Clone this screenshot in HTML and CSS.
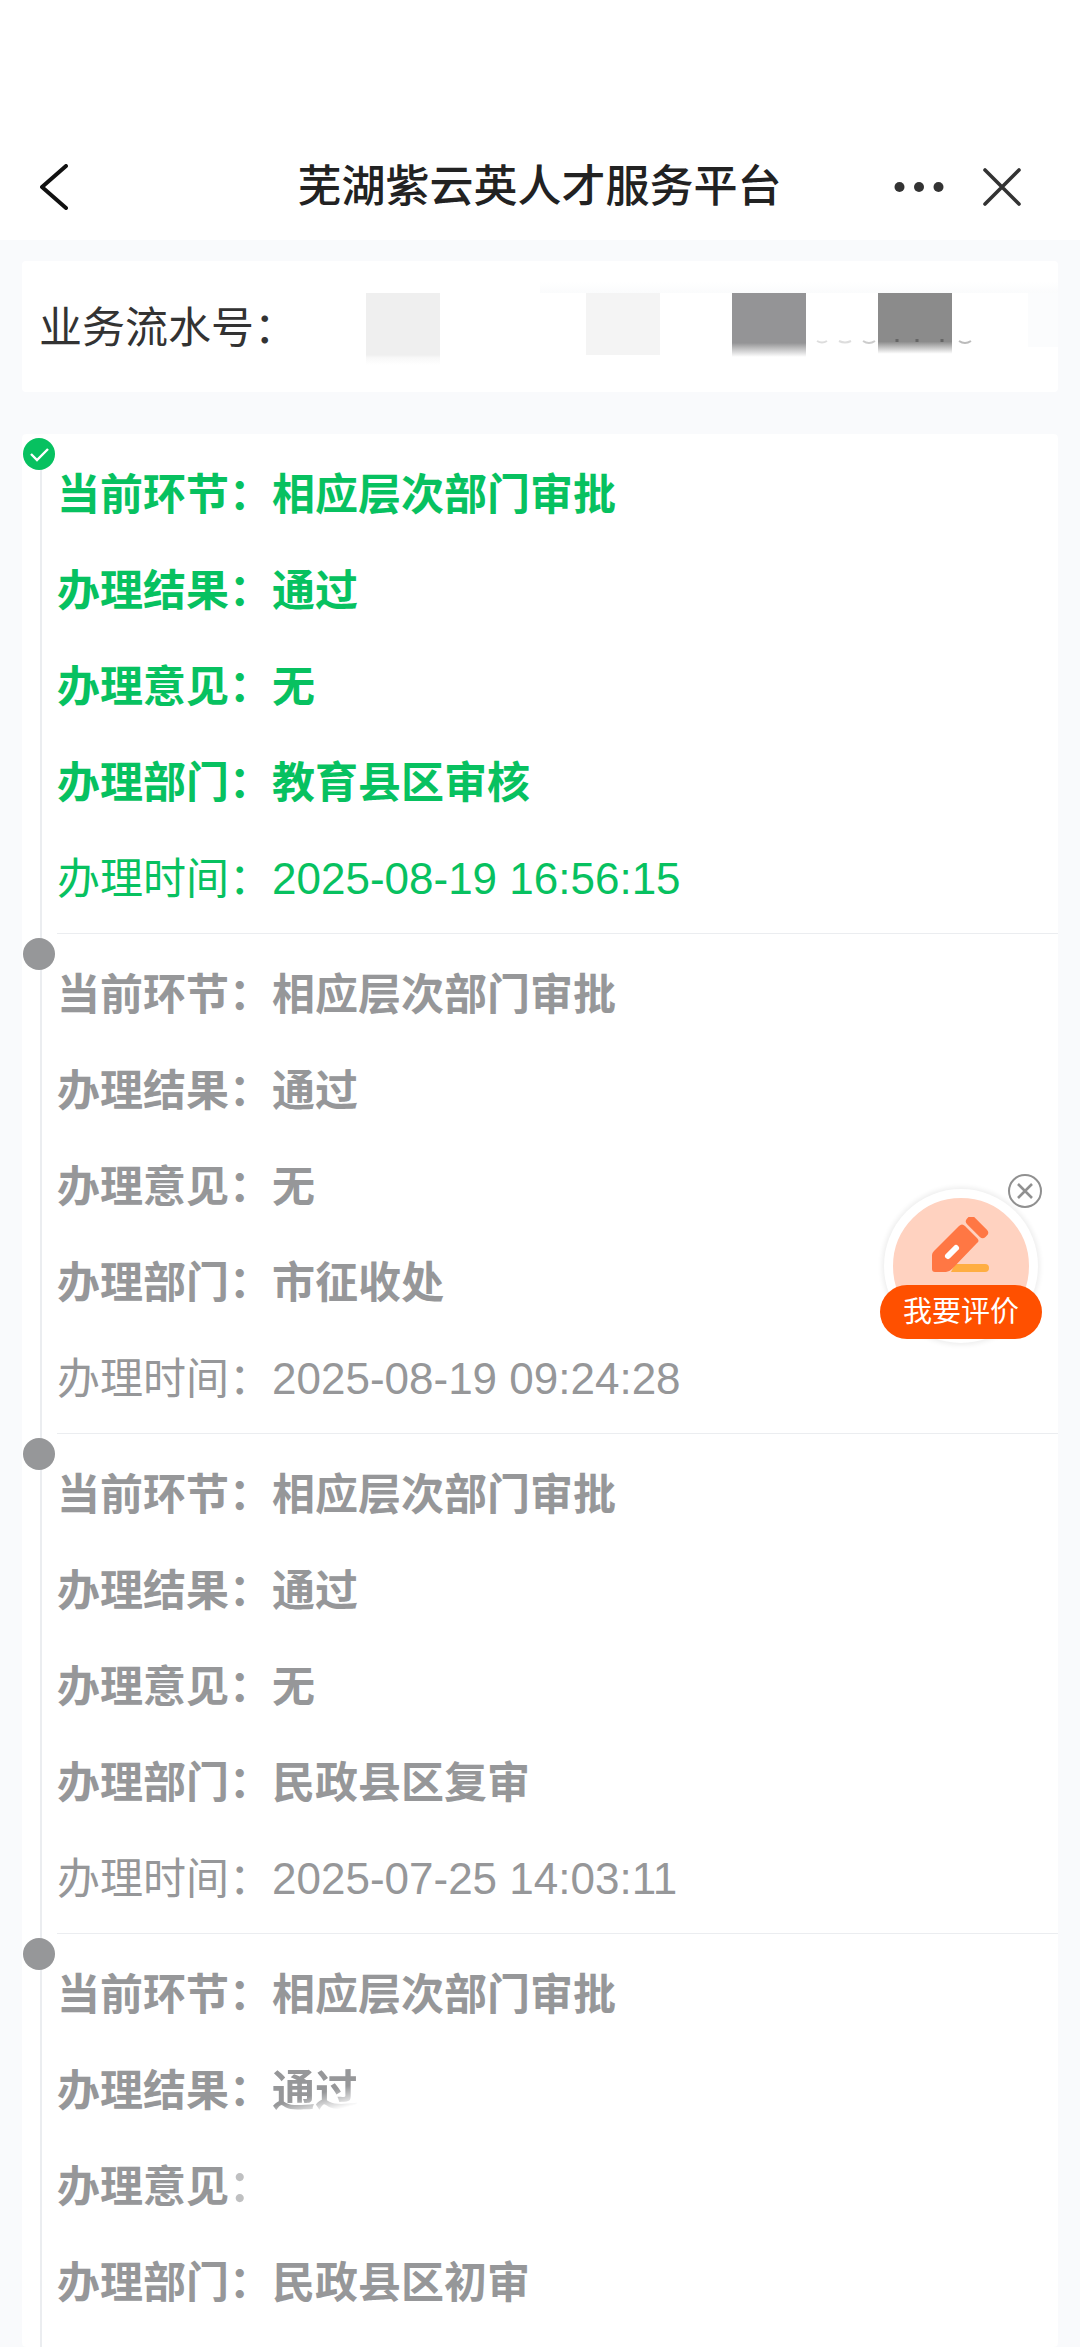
FILE: index.html
```html
<!DOCTYPE html>
<html lang="zh-CN">
<head>
<meta charset="utf-8">
<meta name="viewport" content="width=device-width, initial-scale=1">
<title>芜湖紫云英人才服务平台</title>
<link rel="stylesheet" href="styles.css">
</head>
<body>
<header class="header">
  <button class="icon-button" type="button" aria-label="返回">
    <svg width="28" height="46" viewBox="0 0 28 46"><path d="M26 2 2 23 26 44" fill="none" stroke="#111" stroke-width="4" stroke-linecap="round" stroke-linejoin="round"/></svg>
  </button>
  <h1 class="title">芜湖紫云英人才服务平台</h1>
  <div class="actions">
    <button class="icon-button" type="button" aria-label="更多">
      <svg width="50" height="12" viewBox="0 0 50 12" fill="#333"><circle cx="5.5" cy="6" r="5"/><circle cx="25" cy="6" r="5"/><circle cx="44.5" cy="6" r="5"/></svg>
    </button>
    <button class="icon-button" type="button" aria-label="关闭">
      <svg width="38" height="38" viewBox="0 0 38 38"><path d="M2 2 36 36M36 2 2 36" fill="none" stroke="#333" stroke-width="3.6" stroke-linecap="round"/></svg>
    </button>
  </div>
</header>

<main class="content">
  <section class="card serial">
    <span class="serial-label">业务流水号：</span>
    <svg class="serial-mask" width="768" height="83" viewBox="0 0 768 83" aria-hidden="true">
      <defs>
        <linearGradient id="fade" x1="0" y1="0" x2="0" y2="1"><stop offset="0" stop-color="#949496"/><stop offset=".78" stop-color="#949496"/><stop offset="1" stop-color="#949496" stop-opacity="0"/></linearGradient>
        <linearGradient id="fade-dark" x1="0" y1="0" x2="0" y2="1"><stop offset="0" stop-color="#8b8b8b"/><stop offset=".76" stop-color="#8b8b8b"/><stop offset=".95" stop-color="#8b8b8b" stop-opacity="0"/></linearGradient>
        <linearGradient id="fade-light" x1="0" y1="0" x2="0" y2="1"><stop offset="0" stop-color="#efefef"/><stop offset=".86" stop-color="#efefef"/><stop offset=".9" stop-color="#f8f8f8"/><stop offset="1" stop-color="#fff"/></linearGradient>
        <linearGradient id="haze" x1="0" y1="0" x2="0" y2="1"><stop offset="0" stop-color="#fff"/><stop offset="1" stop-color="#fafbfc"/></linearGradient>
      </defs>
      <rect x="250" width="518" height="11" fill="url(#haze)"/>
      <rect x="738" y="11" width="30" height="54" fill="#fbfcfd"/>
      <rect x="76" y="11" width="74" height="72" fill="url(#fade-light)"/>
      <rect x="296" y="11" width="74" height="62" fill="#f4f4f4"/>
      <rect x="442" y="11" width="74" height="64" fill="url(#fade)"/>
      <rect x="588" y="11" width="74" height="64" fill="url(#fade-dark)"/>
      <g fill="none" stroke="#ddd" stroke-width="2"><path d="M527 59q5 3 10 0"/><path d="M549 59q6 3 12 0"/><path d="M573 59q6 4 12 0" stroke="#ccc"/><path d="M669 59q6 4 12 0" stroke="#bbb"/></g>
      <path d="M607 57v3M627 57v3M652 57v3" stroke="#666" stroke-width="3"/>
    </svg>
  </section>

  <ol class="card steps">
    <li class="step active">
      <span class="marker"><svg width="32" height="32" viewBox="0 0 32 32"><path d="m8 16 6 6 11-11" fill="none" stroke="#fff" stroke-width="2.4"/></svg></span>
      <div class="detail">
        <p>当前环节：相应层次部门审批</p>
        <p>办理结果：通过</p>
        <p>办理意见：无</p>
        <p>办理部门：教育县区审核</p>
        <p class="when">办理时间：<time>2025-08-19 16:56:15</time></p>
      </div>
    </li>
    <li class="step">
      <span class="marker"></span>
      <div class="detail">
        <p>当前环节：相应层次部门审批</p>
        <p>办理结果：通过</p>
        <p>办理意见：无</p>
        <p>办理部门：市征收处</p>
        <p class="when">办理时间：<time>2025-08-19 09:24:28</time></p>
      </div>
    </li>
    <li class="step">
      <span class="marker"></span>
      <div class="detail">
        <p>当前环节：相应层次部门审批</p>
        <p>办理结果：通过</p>
        <p>办理意见：无</p>
        <p>办理部门：民政县区复审</p>
        <p class="when">办理时间：<time>2025-07-25 14:03:11</time></p>
      </div>
    </li>
    <li class="step">
      <span class="marker"></span>
      <div class="detail">
        <p>当前环节：相应层次部门审批</p>
        <p>办理结果：<span class="faded">通过</span></p>
        <p>办理意见<span class="dim">：</span></p>
        <p>办理部门：民政县区初审</p>
      </div>
    </li>
  </ol>
</main>

<aside class="feedback">
  <div class="feedback-disc">
    <svg width="60" height="58" viewBox="0 0 60 58" aria-hidden="true">
      <path d="M24 47h30a4 4 0 0 1 0 8H20z" fill="#ffae42"/>
      <path d="M1 38Q1 36 3 34L28 9q3-3 6 0l12 12q3 3 0 5L21 52q-3 3-6 3H4q-3 0-3-3z" fill="#ff7744"/>
      <rect x="-13" y="-5" width="26" height="10" rx="4" transform="translate(46 10) rotate(45)" fill="#ff7744"/>
      <path d="m17 39 8-8" stroke="#fff" stroke-width="6" stroke-linecap="round"/>
    </svg>
  </div>
  <button class="feedback-button" type="button">我要评价</button>
  <button class="feedback-close" type="button" aria-label="关闭评价">
    <svg width="36" height="36" viewBox="0 0 36 36" fill="none" stroke="#909090"><circle cx="18" cy="18" r="16" fill="#fff" stroke-width="2"/><path d="m11 11 14 14M25 11 11 25" stroke-width="2.6"/></svg>
  </button>
</aside>
</body>
</html>
```
FILE: styles.css
```css
* {
  box-sizing: border-box;
}

body {
  margin: 0;
  background: #f9fafc;
  color: #333;
  font-family: "Liberation Sans", "Noto Sans CJK SC", sans-serif;
  font-size: 43px;
}

button {
  border: 0;
  padding: 0;
  background: none;
  color: inherit;
  font: inherit;
  cursor: pointer;
}

svg {
  display: block;
}

.header {
  display: grid;
  grid-template-columns: 1fr auto 1fr;
  align-items: center;
  padding: 134px 59px 0 40px;
  height: 240px;
  background: #fff;
}

.title {
  margin: 0;
  padding-left: 18px;
  color: #222;
  font-size: 44px;
  font-weight: 500;
  line-height: 64px;
}

.icon-button {
  justify-self: start;
}

.actions {
  display: flex;
  align-items: center;
  justify-content: flex-end;
  gap: 39px;
}

.content {
  display: flex;
  flex-direction: column;
  gap: 42px;
  padding: 21px 22px 0;
}

.card {
  border-radius: 4px;
  background: #fff;
}

.serial {
  display: flex;
  align-items: center;
  justify-content: space-between;
  height: 131px;
  padding: 0 0 6px 17px;
}

.serial-label {
  flex: none;
  width: 251px;
  white-space: nowrap;
}

.serial-mask {
  flex: none;
}

.steps {
  margin: 0;
  padding: 0 0 16px;
  color: #969799;
  list-style: none;
  background: linear-gradient(#ebedf0, #ebedf0) 18px 20px / 2px 100% no-repeat #fff;
}

.step {
  display: grid;
  grid-template-columns: 35px 1fr;
}

.marker {
  width: 32px;
  height: 32px;
  margin-top: 4px;
  margin-left: 1px;
  border-radius: 50%;
  background: #969799;
}

.detail {
  padding: 13px 0 6px;
  border-bottom: 1px solid #ebedf0;
}

.step:last-child .detail {
  padding-bottom: 0;
  border-bottom: 0;
}

.detail p {
  margin: 0;
  font-weight: 700;
  line-height: 96px;
}

.detail .when {
  font-weight: 400;
}

.when time {
  font-size: 44px;
  line-height: 1;
}

.active {
  color: #07c160;
}

.active .marker {
  background: #07c160;
}

.faded {
  -webkit-mask-image: linear-gradient(165deg, #000 55%, transparent 85%);
  mask-image: linear-gradient(165deg, #000 55%, transparent 85%);
}

.dim {
  opacity: 0.6;
}

.feedback {
  position: fixed;
  top: 1173px;
  right: 38px;
  display: flex;
  flex-direction: column;
  align-items: center;
  width: 162px;
}

.feedback-disc {
  display: flex;
  justify-content: center;
  width: 154px;
  height: 154px;
  margin-top: 16px;
  padding-top: 19px;
  border: 9px solid #fff;
  border-radius: 50%;
  background: #ffd2c0;
  box-shadow: 0 0 5px 2px #eee;
}

.feedback-button {
  width: 162px;
  height: 54px;
  margin-top: -58px;
  border-radius: 27px;
  background: #ff5000;
  color: #fff;
  font-size: 29px;
  line-height: 54px;
}

.feedback-close {
  position: absolute;
  top: 0;
  right: -1px;
}
```
